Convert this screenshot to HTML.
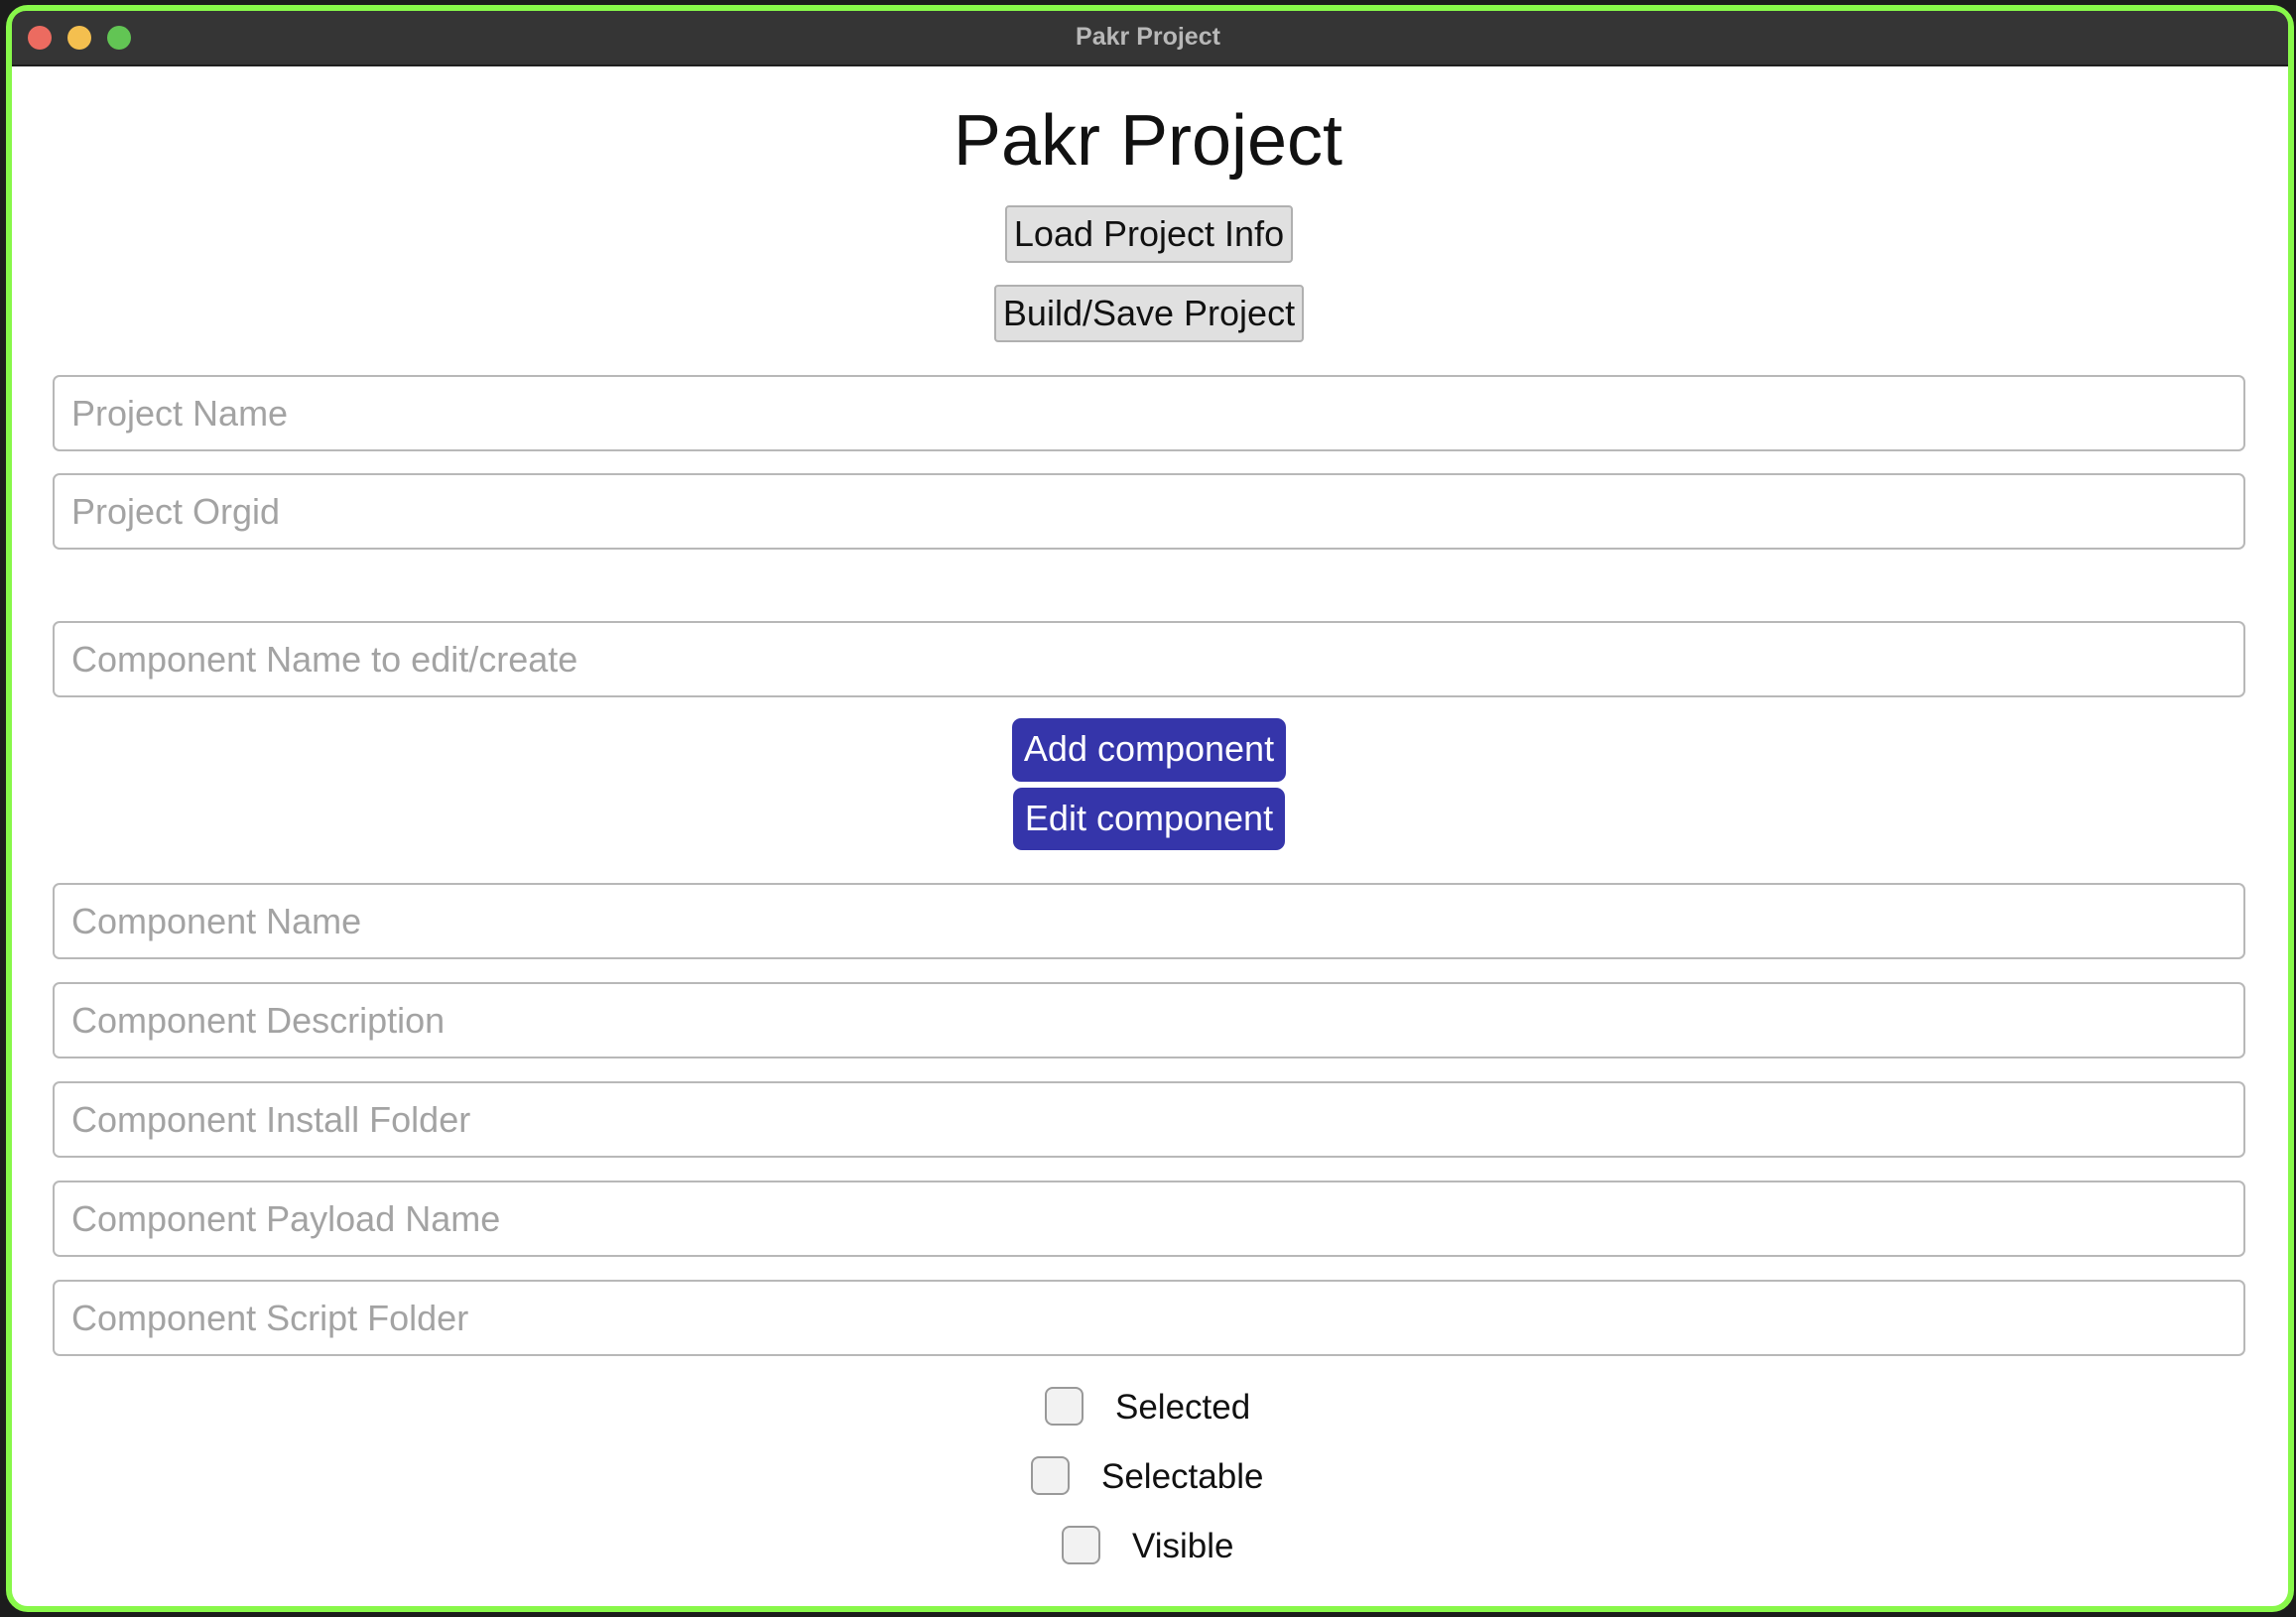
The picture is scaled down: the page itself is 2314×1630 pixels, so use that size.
<!DOCTYPE html>
<html><head><meta charset="utf-8"><style>
*{box-sizing:border-box;margin:0;padding:0}
html,body{width:2314px;height:1630px;overflow:hidden;background:#1c1c1c;font-family:"Liberation Sans",Arial,sans-serif}
.win{position:absolute;left:6px;top:5px;width:2306px;height:1620px;border:6px solid #88f84a;border-radius:22px;background:#fff;overflow:hidden}
.dot{position:absolute;width:24px;height:24px;border-radius:50%}
.a{position:absolute}
h1{position:absolute;left:0;width:2314px;top:101px;text-align:center;font-weight:normal;font-size:72px;color:#111}
.gb{position:absolute;background:#e0e0e0;border:2px solid #b0b0b0;border-radius:4px;font-size:36px;color:#111;text-align:center;line-height:54px}
.in{position:absolute;left:53px;width:2210px;height:77px;border:2px solid #b8b8b8;border-radius:7px;font-size:36px;color:#a3a3a3;padding-left:17px;line-height:73px}
.bb{position:absolute;background:#3535aa;border-radius:9px;color:#fff;font-size:36px;text-align:center;line-height:62px}
.cb{position:absolute;width:39px;height:39px;border:2px solid #999;border-radius:8px;background:#f2f2f2}
.cl{position:absolute;font-size:35px;color:#111;line-height:39px}
</style></head><body>
<div class="win"></div>
<div class="a" style="left:12px;top:11px;width:2294px;height:56px;background:#353535;border-radius:14px 14px 0 0;border-bottom:2px solid #1e1e1e"></div>
<div class="dot" style="left:28px;top:26px;background:#ec6b60"></div>
<div class="dot" style="left:68px;top:26px;background:#f4bf4f"></div>
<div class="dot" style="left:108px;top:26px;background:#62c554"></div>
<div class="a" style="left:0;width:2314px;top:23px;text-align:center;color:#b8b8b8;font-weight:bold;font-size:25px">Pakr Project</div>

<h1>Pakr Project</h1>
<div class="gb" style="left:1013px;top:207px;width:290px;height:58px">Load Project Info</div>
<div class="gb" style="left:1002px;top:287px;width:312px;height:58px">Build/Save Project</div>

<div class="in" style="top:378px">Project Name</div>
<div class="in" style="top:477px">Project Orgid</div>
<div class="in" style="top:626px">Component Name to edit/create</div>

<div class="bb" style="left:1020px;top:724px;width:276px;height:64px">Add component</div>
<div class="bb" style="left:1021px;top:794px;width:274px;height:63px">Edit component</div>

<div class="in" style="top:890px">Component Name</div>
<div class="in" style="top:990px">Component Description</div>
<div class="in" style="top:1090px">Component Install Folder</div>
<div class="in" style="top:1190px">Component Payload Name</div>
<div class="in" style="top:1290px">Component Script Folder</div>

<div class="cb" style="left:1053px;top:1398px"></div><div class="cl" style="left:1124px;top:1399px">Selected</div>
<div class="cb" style="left:1039px;top:1468px"></div><div class="cl" style="left:1110px;top:1469px">Selectable</div>
<div class="cb" style="left:1070px;top:1538px"></div><div class="cl" style="left:1141px;top:1539px">Visible</div>
</body></html>
